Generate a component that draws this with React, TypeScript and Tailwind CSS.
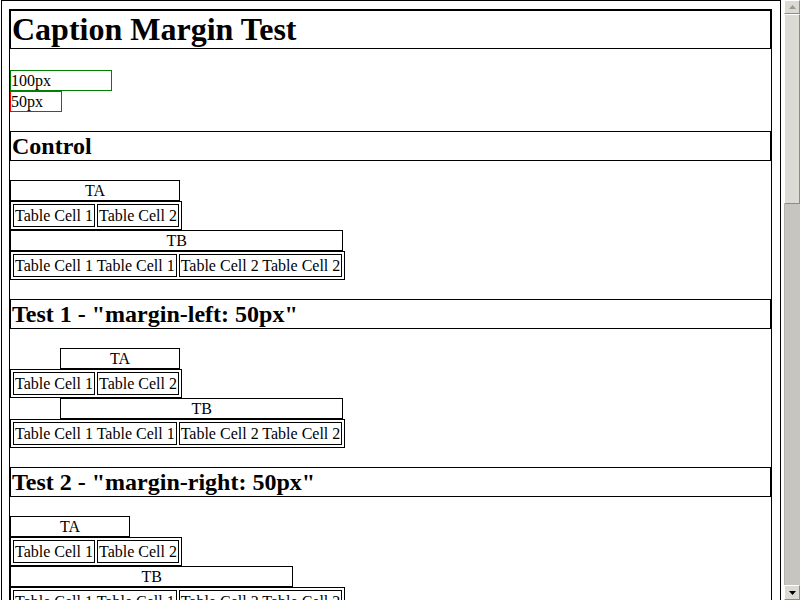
import React from "react";

type Pair = { label: string; cells: [string, string] };

const pairs: Pair[] = [
  { label: "TA", cells: ["Table Cell 1", "Table Cell 2"] },
  { label: "TB", cells: ["Table Cell 1 Table Cell 1", "Table Cell 2 Table Cell 2"] },
];

function CaptionTable({ pair, capClass }: { pair: Pair; capClass: string }) {
  return (
    <div className="w-fit">
      <div className={`border border-black text-center leading-[19px] ${capClass}`}>{pair.label}</div>
      <table className="border border-black border-separate border-spacing-[2px]">
        <tbody>
          <tr>
            {pair.cells.map((c, i) => (
              <td key={i} className="border border-black p-[1px] leading-[19px] whitespace-nowrap">
                {c}
              </td>
            ))}
          </tr>
        </tbody>
      </table>
    </div>
  );
}

function Section({ title, capClass }: { title: string; capClass: string }) {
  return (
    <section>
      <h2 className="mt-[19px] mb-[19px] border border-black pl-px text-[24px] font-bold leading-[28px]">{title}</h2>
      {pairs.map((p) => (
        <CaptionTable key={p.label} pair={p} capClass={capClass} />
      ))}
    </section>
  );
}

function Triangle({ up, color }: { up: boolean; color: string }) {
  return (
    <svg width="7" height="4" viewBox="0 0 7 4">
      <polygon points={up ? "3.5,0 7,4 0,4" : "0,0 7,0 3.5,4"} fill={color} />
    </svg>
  );
}

function Scrollbar() {
  return (
    <div className="ml-[3px] flex h-[600px] w-[16px] flex-col bg-[#c7c5bf]">
      <div className="flex h-[14px] items-center justify-center border border-t-white border-l-white border-r-[#8d8b86] border-b-[#8d8b86] bg-[#dcdad5]">
        <Triangle up color="#9a9893" />
      </div>
      <div className="h-[190px] border border-t-white border-l-white border-r-[#8d8b86] border-b-[#8d8b86] bg-[#dcdad5]" />
      <div className="flex-1 border-l border-[#b5b3ae]" />
      <div className="flex h-[15px] items-center justify-center border border-t-white border-l-white border-r-[#8d8b86] border-b-[#8d8b86] bg-[#dcdad5]">
        <Triangle up={false} color="#000000" />
      </div>
    </div>
  );
}

export default function App() {
  return (
    <div className="flex h-[600px] w-[800px] overflow-hidden bg-white font-['Liberation_Serif',serif] text-[16px] text-black">
      <div className="ml-px flex h-[600px] w-[780px] flex-col border-x border-t border-black pl-[7px] pr-[8px] pt-[8px]">
        <div className="flex-1 border-x border-t border-black">
          <h1 className="mb-[21px] border border-black pl-px text-[32px] font-bold leading-[37px]">Caption Margin Test</h1>
          <div className="w-[102px] border border-[#008000] leading-[19px]">100px</div>
          <div className="w-[52px] border border-[#ff0000] leading-[19px]">50px</div>
          <Section title="Control" capClass="mr-[2px]" />
          <Section title={'Test 1 - "margin-left: 50px"'} capClass="ml-[50px] mr-[2px]" />
          <Section title={'Test 2 - "margin-right: 50px"'} capClass="mr-[52px]" />
        </div>
      </div>
      <Scrollbar />
    </div>
  );
}
